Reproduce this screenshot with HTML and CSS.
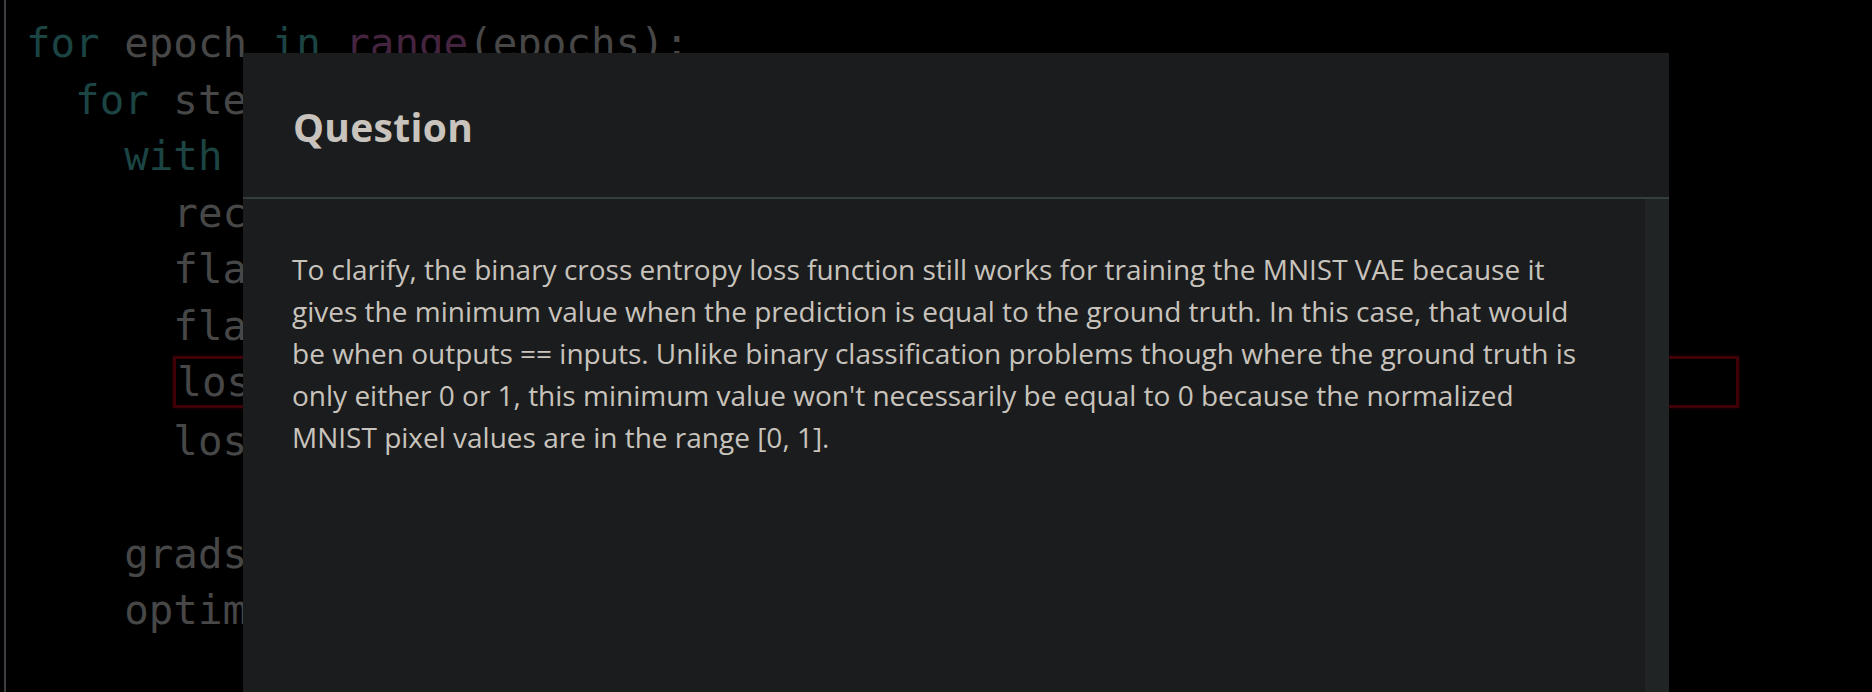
FILE: index.html
```html
<!DOCTYPE html>
<html lang="en">
<head>
<meta charset="utf-8">
<title>Question</title>
<link rel="stylesheet" href="styles.css">
</head>
<body>
<div class="page">
  <div class="cell">
    <div class="code">
      <div class="ln"><span class="kw">for</span> epoch <span class="kw">in</span> <span class="fn">range</span>(epochs):</div>
      <div class="ln i1"><span class="kw">for</span> step, x_batch_train <span class="kw">in</span> <span class="fn">enumerate</span>(training_dataset):</div>
      <div class="ln i2"><span class="kw">with</span> tf.GradientTape() <span class="kw">as</span> tape:</div>
      <div class="ln i3">reconstructed = vae(x_batch_train)</div>
      <div class="ln i3">flattened_inputs = tf.reshape(x_batch_train, shape=[-1])</div>
      <div class="ln i3">flattened_outputs = tf.reshape(reconstructed, shape=[-1])</div>
      <div class="ln hl">loss = bce_loss(flattened_inputs, flattened_outputs) * 784</div>
      <div class="ln i3">loss += <span class="fn">sum</span>(vae.losses)</div>
      <div class="ln">&nbsp;</div>
      <div class="ln i2">grads = tape.gradient(loss, vae.trainable_weights)</div>
      <div class="ln i2">optimizer.apply_gradients(<span class="fn">zip</span>(grads, vae.trainable_weights))</div>
    </div>
  </div>

  <div class="modal">
    <div class="modal-header">
      <h2 class="modal-title">Question</h2>
    </div>
    <div class="modal-body">
      <div class="modal-content">
        <p class="answer">To clarify, the binary cross entropy loss function still works for training the MNIST VAE because it gives the minimum value when the prediction is equal to the ground truth. In this case, that would be when outputs == inputs. Unlike binary classification problems though where the ground truth is only either 0 or 1, this minimum value won't necessarily be equal to 0 because the normalized MNIST pixel values are in the range [0, 1].</p>
      </div>
      <div class="scroll-track"></div>
    </div>
  </div>
</div>
</body>
</html>
```

FILE: styles.css
```css
html, body {
  margin: 0;
  padding: 0;
  background: #000;
  overflow: hidden;
}

.page {
  position: relative;
  width: 1872px;
  height: 692px;
  overflow: hidden;
  background: #000;
}

.cell {
  margin-left: 4px;
  height: 100%;
  border-left: 2px solid #3a3e42;
  padding: 15px 0 0 20px;
  box-sizing: border-box;
}

.code {
  font-family: "DejaVu Sans Mono", "Liberation Mono", monospace;
  font-size: 40.8px;
  line-height: 56.5px;
  color: #474747;
}

.ln {
  white-space: pre;
  height: 56.5px;
}

.ln.i1 { padding-left: 2ch; }
.ln.i2 { padding-left: 4ch; }
.ln.i3 { padding-left: 6ch; }

.ln.hl {
  margin: 2px 0 4.5px 6ch;
  width: 1566px;
  height: 52px;
  box-sizing: border-box;
  border: 3px solid #3f0008;
  box-shadow: 0 0 3px #2a0005;
  line-height: 46px;
  padding-left: 1px;
}

.kw { color: #1b4443; }
.fn { color: #45243f; }

.modal {
  position: absolute;
  left: 243px;
  top: 53px;
  width: 1426px;
  height: 700px;
  background: #1b1c1e;
  display: flex;
  flex-direction: column;
  font-family: "Open Sans", "Noto Sans", sans-serif;
  color: #c8c3bc;
}

.modal-header {
  padding: 52px 50px 49px;
  border-bottom: 2px solid #363d3f;
}

.modal-title {
  margin: 0;
  font-size: 39px;
  line-height: 43.2px;
  font-weight: 700;
  letter-spacing: 0.3px;
}

.modal-body {
  flex: 1;
  display: flex;
}

.modal-content {
  flex: 1;
  padding: 49px 49px;
}

.answer {
  margin: 0;
  font-size: 28px;
  line-height: 42px;
}

.scroll-track {
  width: 24px;
  background: #202425;
}
```
